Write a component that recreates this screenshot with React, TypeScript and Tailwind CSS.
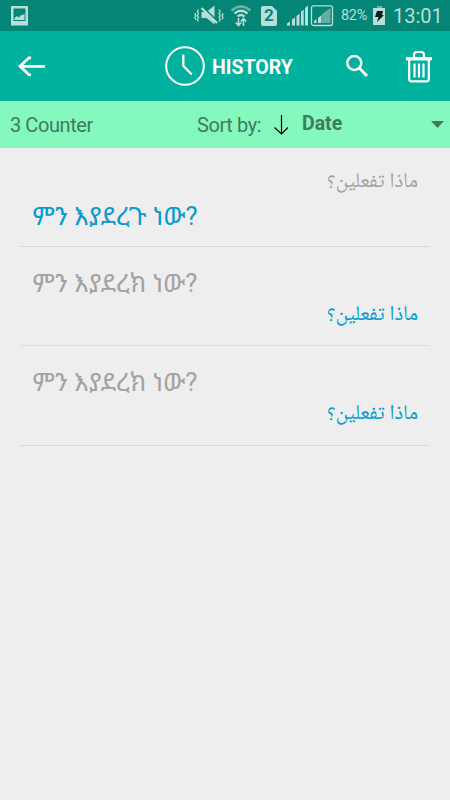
import type { ReactNode } from "react";

const ETHIOPIC = "font-['Roboto','Noto_Sans_Ethiopic','Noto_Sans',sans-serif]";
const ARABIC = "font-['Noto_Naskh_Arabic','DejaVu_Sans',sans-serif]";

function StatusBar() {
  return (
    <div className="flex h-[31px] shrink-0 items-center bg-[#058575] text-[#b9ddd8]">
      <svg className="ml-[10px] h-[22px] w-[18px]" viewBox="0 0 18 22" fill="currentColor">
        <path fillRule="evenodd" d="M1 1h17v19.500H1zM3.500 3.500v12.500h12V3.500z" />
        <path d="M4.500 15v-2l2.500-2 2 1.500 2.500-3 1 1 2-2v6.500z" />
      </svg>
      <svg className="ml-[166px] h-[22px] w-[30px]" viewBox="0 0 30 22" fill="none" stroke="currentColor">
        <path d="M7.500 7h5l8-6.500v19l-8-6.500h-5z" fill="currentColor" stroke="none" />
        <path d="M9 2.500l15 14.500" stroke="#058575" strokeWidth="2" />
        <path d="M7.500 3l15.500 15" strokeWidth="2.300" />
        <path d="M4.500 4.500l-1.200 2 1.200 2-1.200 2 1.200 2-1.200 2 1 2M1.800 8l-1 1.500 1 1.500-1 1.500 1 2M25 4.500l1.200 2-1.200 2 1.200 2-1.200 2 1.200 2-1 2M28 8l1 1.500-1 1.500 1 1.500-1 2" strokeWidth="1.300" />
      </svg>
      <svg className="ml-[6px] h-[22px] w-[22px]" viewBox="0 0 22 22" fill="none" stroke="currentColor" strokeWidth="2.300">
        <path d="M1.500 5.500Q11-2.500 20.500 5.500" opacity=".55" />
        <path d="M4.500 8.500Q11 3 17.500 8.500M7.500 11.500Q11 8.500 14.500 11.500" />
        <path d="M8.500 13v7M5.800 17.500l2.700 3 2.700-3M13.500 21v-7M10.800 16.500l2.700-3 2.700 3" strokeWidth="1.600" />
      </svg>
      <div className="relative ml-[9px] h-[20px] w-[16px]">
        <svg className="h-[20px] w-[16px]" viewBox="0 0 16 20" fill="currentColor">
          <path d="M2 0h9l5 5v13a2 2 0 0 1-2 2H2a2 2 0 0 1-2-2V2a2 2 0 0 1 2-2z" />
        </svg>
        <span className="absolute inset-x-0 -top-px text-center text-[17px] leading-[21px] font-bold text-[#058575]">2</span>
      </div>
      <svg className="ml-[10px] h-[22px] w-[22px]" viewBox="0 0 22 22" fill="currentColor">
        <path d="M0 20.500v-2l3-2v4zM5 20.500v-6l3-2v8zM9.500 20.500V11l3-2.500v12zM14 20.500V6.500l2.700-2v16zM18 20.500V3l3-2.500v20z" />
      </svg>
      <svg className="ml-px h-[22px] w-[24px]" viewBox="0 0 24 22" fill="currentColor">
        <rect x="1.500" y=".800" width="21" height="19.700" rx="2" fill="none" stroke="currentColor" strokeWidth="1.300" />
        <path d="M4 18v-2l2.500-2v4zM8 18v-5l3.500-3v8z" />
        <path d="M12 18v-9L20.500 3v15z" opacity=".5" />
      </svg>
      <span className="ml-[7px] w-[28px] text-[14.500px] leading-5 tracking-[-0.300px] whitespace-nowrap">82%</span>
      <svg className="ml-[3px] h-[20px] w-[14px]" viewBox="0 0 14 20" fill="currentColor">
        <path d="M5 0h5v3H5z" opacity=".55" />
        <path d="M1 2h12v17H1z" />
        <path d="M5 5h6l-1 4h2L5 16l1.500-5H3z" fill="#071f1c" />
      </svg>
      <span className="ml-[7px] text-[20px] leading-6 whitespace-nowrap">13:01</span>
    </div>
  );
}

function Header() {
  return (
    <div className="flex h-[70px] shrink-0 items-center bg-[#00b19e] text-white">
      <svg className="ml-[18px] h-[20px] w-[27px]" viewBox="0 0 27 20" fill="none" stroke="currentColor" strokeWidth="2.800">
        <path d="M27 10.300H2M13 1.800h-2L2 10.300l9 8.500h2" />
      </svg>
      <svg className="ml-[120px] h-[40px] w-[40px]" viewBox="0 0 40 40" fill="none" stroke="currentColor" strokeWidth="2">
        <circle cx="20" cy="20" r="18.800" />
        <path d="M18.300 8.500v11.200l8.500 8.800" strokeWidth="2.300" />
      </svg>
      <h1 className="ml-[7px] w-[82px] pt-[3px] text-[19.500px] leading-6 font-bold whitespace-nowrap">HISTORY</h1>
      <svg className="ml-[51px] h-[24px] w-[24px]" viewBox="0 0 24 24" fill="none" stroke="currentColor">
        <circle cx="9.300" cy="9" r="7" strokeWidth="2.500" />
        <path d="M14.300 14l7.700 8" strokeWidth="3" />
      </svg>
      <svg className="ml-[36px] h-[33px] w-[28px]" viewBox="0 0 28 33" fill="none" stroke="currentColor">
        <path d="M9 7V4.800Q9 2 12 2h4q3 0 3 2.800V7" strokeWidth="2.200" />
        <path d="M1.500 10V7.500h25V10z" fill="currentColor" strokeWidth="1" strokeLinejoin="round" />
        <path d="M4.200 10v19q0 2.300 2.300 2.300h15q2.300 0 2.300-2.300V10" strokeWidth="2.200" />
        <path d="M9.500 13.500v14M14 13.500v14M18.500 13.500v14" strokeWidth="2.200" />
      </svg>
    </div>
  );
}

function SortBar() {
  return (
    <div className="flex h-[47px] shrink-0 items-center bg-[#84f8bd] text-[20px] leading-6 text-[#3f7c5e]">
      <span className="ml-[10px] w-[187px] pt-px tracking-[-0.420px]">3 Counter</span>
      <span className="w-[66px] pt-px tracking-[-0.400px] whitespace-nowrap">Sort by:</span>
      <svg className="ml-[10px] h-[22px] w-[16px]" viewBox="0 0 16 22" fill="none" stroke="#000" strokeWidth="1.200">
        <path d="M8.500 1v18.500M1.500 13.500l7 6.500 6.500-6.500" />
      </svg>
      <span className="ml-[13px] pb-[2px] text-[19.500px] font-bold">Date</span>
      <svg className="mr-[6px] mb-px ml-auto h-[7px] w-[13px]" viewBox="0 0 13 7" fill="currentColor">
        <path d="M0 0h13L6.500 7z" />
      </svg>
    </div>
  );
}

function Amharic({ children, className }: { children: ReactNode; className: string }) {
  return <p lang="am" className={`${ETHIOPIC} h-[34px] pl-[12.500px] text-[25.500px] leading-[34px] font-normal whitespace-nowrap ${className}`}>{children}</p>;
}

function Arabic({ children, className }: { children: ReactNode; className: string }) {
  return <p lang="ar" dir="rtl" className={`${ARABIC} h-[32px] pr-[12px] text-[21px] leading-[32px] whitespace-nowrap ${className}`}>{children}</p>;
}

export default function App() {
  return (
    <div className="flex h-[800px] w-[450px] flex-col overflow-hidden bg-[#eeeeee] font-['Roboto',sans-serif]">
      <StatusBar />
      <Header />
      <SortBar />
      <div className="mx-5 flex flex-col">
        <div className="h-[99px] border-b border-[#d9d9d9] pt-[19px]">
          <Arabic className="text-[#a2a2a2]">ماذا تفعلين؟</Arabic>
          <Amharic className="text-[#0899d0]">ምን እያደረጉ ነው?</Amharic>
        </div>
        <div className="h-[99px] border-b border-[#dddddd] pt-[19px]">
          <Amharic className="text-[#a2a2a2]">ምን እያደረክ ነው?</Amharic>
          <Arabic className="text-[#0899d0]">ماذا تفعلين؟</Arabic>
        </div>
        <div className="h-[100px] border-b border-[#d9d9d9] pt-[19px]">
          <Amharic className="text-[#a2a2a2]">ምን እያደረክ ነው?</Amharic>
          <Arabic className="text-[#0899d0]">ماذا تفعلين؟</Arabic>
        </div>
      </div>
    </div>
  );
}
